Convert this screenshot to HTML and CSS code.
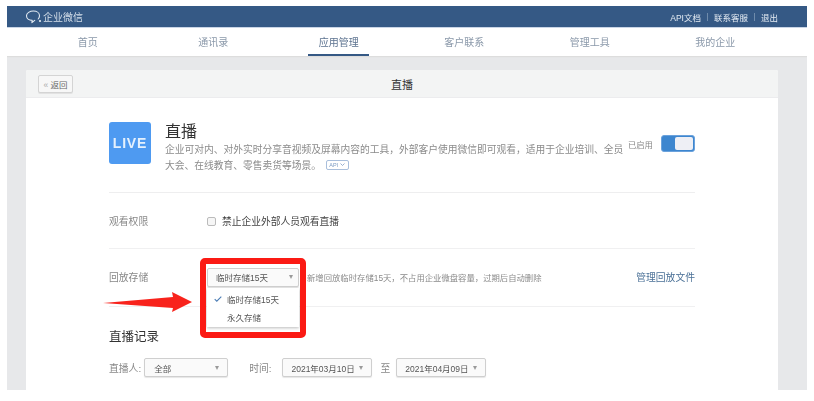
FILE: index.html
```html
<!DOCTYPE html>
<html lang="zh">
<head>
<meta charset="utf-8">
<title>企业微信</title>
<link rel="stylesheet" href="styles.css">
</head>
<body>
<div class="frame">
  <header class="topbar">
    <div class="brand">
      <svg class="brand-icon" width="18" height="14" viewBox="0 0 18 14" fill="none"><path d="M13.200 9c.9-1 1.300-2 1.300-3.300C14.500 3 11.900 1 8.400 1S1.500 3 1.500 5.800c0 2.600 2.500 4.500 5.700 4.600l-.3 2.200 2.800-2.300" stroke="#e4ebf3" stroke-width="1.100" stroke-linecap="round" stroke-linejoin="round"/><circle cx="15" cy="11" r="1.100" fill="#e4ebf3"/></svg>
      <span>企业微信</span>
    </div>
    <nav class="toplinks"><span>API文档</span><i></i><span>联系客服</span><i></i><span>退出</span></nav>
  </header>
  <nav class="mainnav">
    <a>首页</a><a>通讯录</a><a class="on">应用管理</a><a>客户联系</a><a>管理工具</a><a>我的企业</a>
  </nav>
  <main class="stage">
    <section class="card">
      <div class="cardhead">
        <button class="back"><span class="chev">«</span> 返回</button>
        <h1>直播</h1>
      </div>
      <div class="cardbody">
        <div class="intro">
          <div class="logo">LIVE</div>
          <div class="introtext">
            <h2>直播</h2>
            <p>企业可对内、对外实时分享音视频及屏幕内容的工具，外部客户使用微信即可观看，适用于企业培训、全员大会、在线教育、零售卖货等场景。 <span class="api">API <svg width="5" height="3" viewBox="0 0 5 3"><path d="M.5.500 2.500 2.500 4.500.5" stroke="#7d9cc4" fill="none" stroke-width=".8"/></svg></span></p>
          </div>
          <div class="status">
            <span>已启用</span>
            <div class="switch"><b></b></div>
          </div>
        </div>
        <div class="row perm">
          <div class="rowlabel">观看权限</div>
          <label class="check"><span class="box"></span>禁止企业外部人员观看直播</label>
        </div>
        <div class="row store">
          <div class="rowlabel">回放存储</div>
          <div class="select wide"><span>临时存储15天</span><em></em></div>
          <p class="hint">新增回放临时存储15天，不占用企业微盘容量，过期后自动删除</p>
          <a class="manage">管理回放文件</a>
          <div class="menu">
            <div class="opt"><svg width="8" height="6" viewBox="0 0 8 6"><path d="M.7 3.200 2.800 5.200 7.300.7" stroke="#4a7cb5" fill="none" stroke-width="1.100"/></svg>临时存储15天</div>
            <div class="opt">永久存储</div>
          </div>
          <div class="redbox"></div>
          <svg class="arrow" width="89" height="20" viewBox="0 0 89 20"><path d="M0 11 70 5 69 0 89 10 69 20 70 16Z" fill="#f8231c"/></svg>
        </div>
        <h3>直播记录</h3>
        <div class="filters">
          <span class="flabel">直播人:</span>
          <div class="select who"><span>全部</span><em></em></div>
          <span class="flabel time">时间:</span>
          <div class="select date"><span>2021年03月10日</span><em></em></div>
          <span class="flabel to">至</span>
          <div class="select date"><span>2021年04月09日</span><em></em></div>
        </div>
      </div>
    </section>
  </main>
</div>
</body>
</html>
```
FILE: styles.css
```css
* { box-sizing: border-box; }
html, body { margin: 0; height: 100%; background: #fff; overflow: hidden; }
body { font-family: "Liberation Sans", "Noto Sans CJK SC", sans-serif; color: #444; }
.frame { margin: 6px 7px 0; width: 800px; height: 384px; display: flex; flex-direction: column; overflow: hidden; filter: blur(.4px); }
.topbar { height: 22px; flex: none; background: #355985; color: #e4ebf3; display: flex; align-items: center; justify-content: space-between; padding: 0 29px 0 18px; font-size: 8.500px; border-bottom: 1px solid #c9d5e6; }
.brand { display: flex; align-items: center; font-size: 10px; color: #d5dfea; }
.toplinks { display: flex; align-items: center; }
.toplinks i { width: 1px; height: 8px; background: #6f8bab; margin: 0 6px; }
.mainnav { height: 28px; flex: none; background: #fff; display: grid; grid-template-columns: repeat(6, 125.500px); padding-left: 18px; font-size: 10px; color: #8b99aa; box-shadow: 0 1px 1px #ddd; position: relative; }
.mainnav a { display: flex; align-items: center; justify-content: center; height: 28px; padding-top: 1px; border-bottom: 2px solid transparent; width: 61px; justify-self: center; white-space: nowrap; }
.mainnav a.on { border-bottom-color: #355985; color: #5d7390; }
.stage { flex: 1; background: #e7e8ea; padding: 14px 29px 0 19px; min-height: 0; }
.card { background: #fff; height: 100%; border-radius: 2px 2px 0 0; overflow: hidden; }
.cardhead { height: 28px; background: #f3f4f4; border-bottom: 1px solid #ececee; display: flex; align-items: center; justify-content: center; position: relative; }
.cardhead h1 { margin: 0; font-size: 11px; font-weight: 400; color: #333; }
.back { position: absolute; left: 12px; top: 5px; width: 35px; height: 18px; border: 1px solid #d4d4d4; background: #f7f7f7; border-radius: 2px; font: 8.500px "Liberation Sans", "Noto Sans CJK SC", sans-serif; color: #666; padding: 0; box-shadow: 0 1px 0 #e2e2e2; }
.chev { color: #aaa; }
.cardbody { padding: 0 83px; position: relative; }
.intro { height: 95px; border-bottom: 1px solid #eeeeef; display: flex; position: relative; }
.logo { width: 42px; height: 42px; margin-top: 24px; background: #4e9af1; border-radius: 3px; color: #e4f0fd; font-size: 14px; font-weight: 700; letter-spacing: .8px; display: flex; align-items: center; justify-content: center; }
.introtext { margin: 24px 0 0 14px; width: 466px; }
.introtext h2 { margin: 0; font-size: 16px; font-weight: 400; color: #333; line-height: 20px; }
.introtext p { margin: 0; font-size: 9.750px; line-height: 15.500px; color: #8b8b8b; width: 462px; }
.api { display: inline-flex; align-items: center; justify-content: center; gap: 2px; width: 23px; height: 10px; border: 1px solid #a9bfdc; border-radius: 2px; font-size: 5.500px; line-height: 8px; color: #7d9cc4; vertical-align: 2px; margin-left: 2px; }
.status { position: absolute; right: 0; top: 37px; display: flex; align-items: center; gap: 8px; font-size: 8.400px; color: #888; }
.switch { width: 34px; height: 17px; border-radius: 3px; background: #3d86cf; padding: 1px; display: flex; justify-content: flex-end; border: 1px solid #6ba2dc; }
.switch b { width: 18px; height: 13px; background: #eeeff5; border-radius: 2px; }
.row { position: relative; display: flex; align-items: center; border-bottom: 1px solid #f0f0f1; }
.rowlabel { width: 97px; font-size: 9.800px; color: #888; flex: none; }
.perm { height: 56px; padding-top: 1px; }
.check { display: flex; align-items: center; font-size: 9.750px; color: #444; margin-left: 1px; }
.box { width: 9px; height: 9px; border: 1px solid #bbb; border-radius: 2px; background: #f6f6f6; margin: 0 6px 0 0; }
.store { height: 58px; padding-bottom: 1px; }
.select { display: flex; align-items: center; justify-content: space-between; background: #fafafa; border: 1px solid #cfcfcf; border-radius: 2px; box-shadow: 0 1px 1px #e6e6e6; font-size: 8.500px; color: #555; white-space: nowrap; flex: none; }
.select em { width: 0; height: 0; border-left: 2.500px solid transparent; border-right: 2.500px solid transparent; border-top: 4px solid #9a9a9a; }
.wide { width: 92px; height: 19px; padding: 0 5px 0 8px; margin-left: 1px; }
.hint { margin: 0 0 0 8px; font-size: 8.360px; color: #8a8a8a; white-space: nowrap; }
.manage { margin-left: auto; font-size: 9.800px; color: #4b7197; }
.menu { position: absolute; left: 98px; top: 39px; width: 92px; height: 39px; background: #fff; box-shadow: 0 1px 3px #bbb; padding-top: 2px; font-size: 8.500px; color: #555; z-index: 2; }
.opt { height: 18px; display: flex; align-items: center; padding-left: 20px; position: relative; }
.opt svg { position: absolute; left: 7px; top: 6px; }
.redbox { position: absolute; left: 91px; top: 9px; width: 106px; height: 80px; border: 6px solid #fb1a14; border-radius: 5px; z-index: 3; }
.arrow { position: absolute; left: -6px; top: 43px; z-index: 3; }
h3 { margin: 20px 0 0; font-size: 12.500px; line-height: 20px; font-weight: 400; color: #333; }
.filters { display: flex; align-items: center; margin-top: 11px; }
.flabel { font-size: 9.800px; color: #888; white-space: nowrap; }
.select.who { width: 84px; height: 19px; margin-left: 3px; padding: 0 8px 0 9px; }
.flabel.time { margin-left: 21px; }
.select.date { width: 90px; height: 19px; padding: 0 8px 0 8px; margin-left: 11px; }
.flabel.to { margin-left: 8px; }
.flabel.to + .select.date { margin-left: 6px; }
```
